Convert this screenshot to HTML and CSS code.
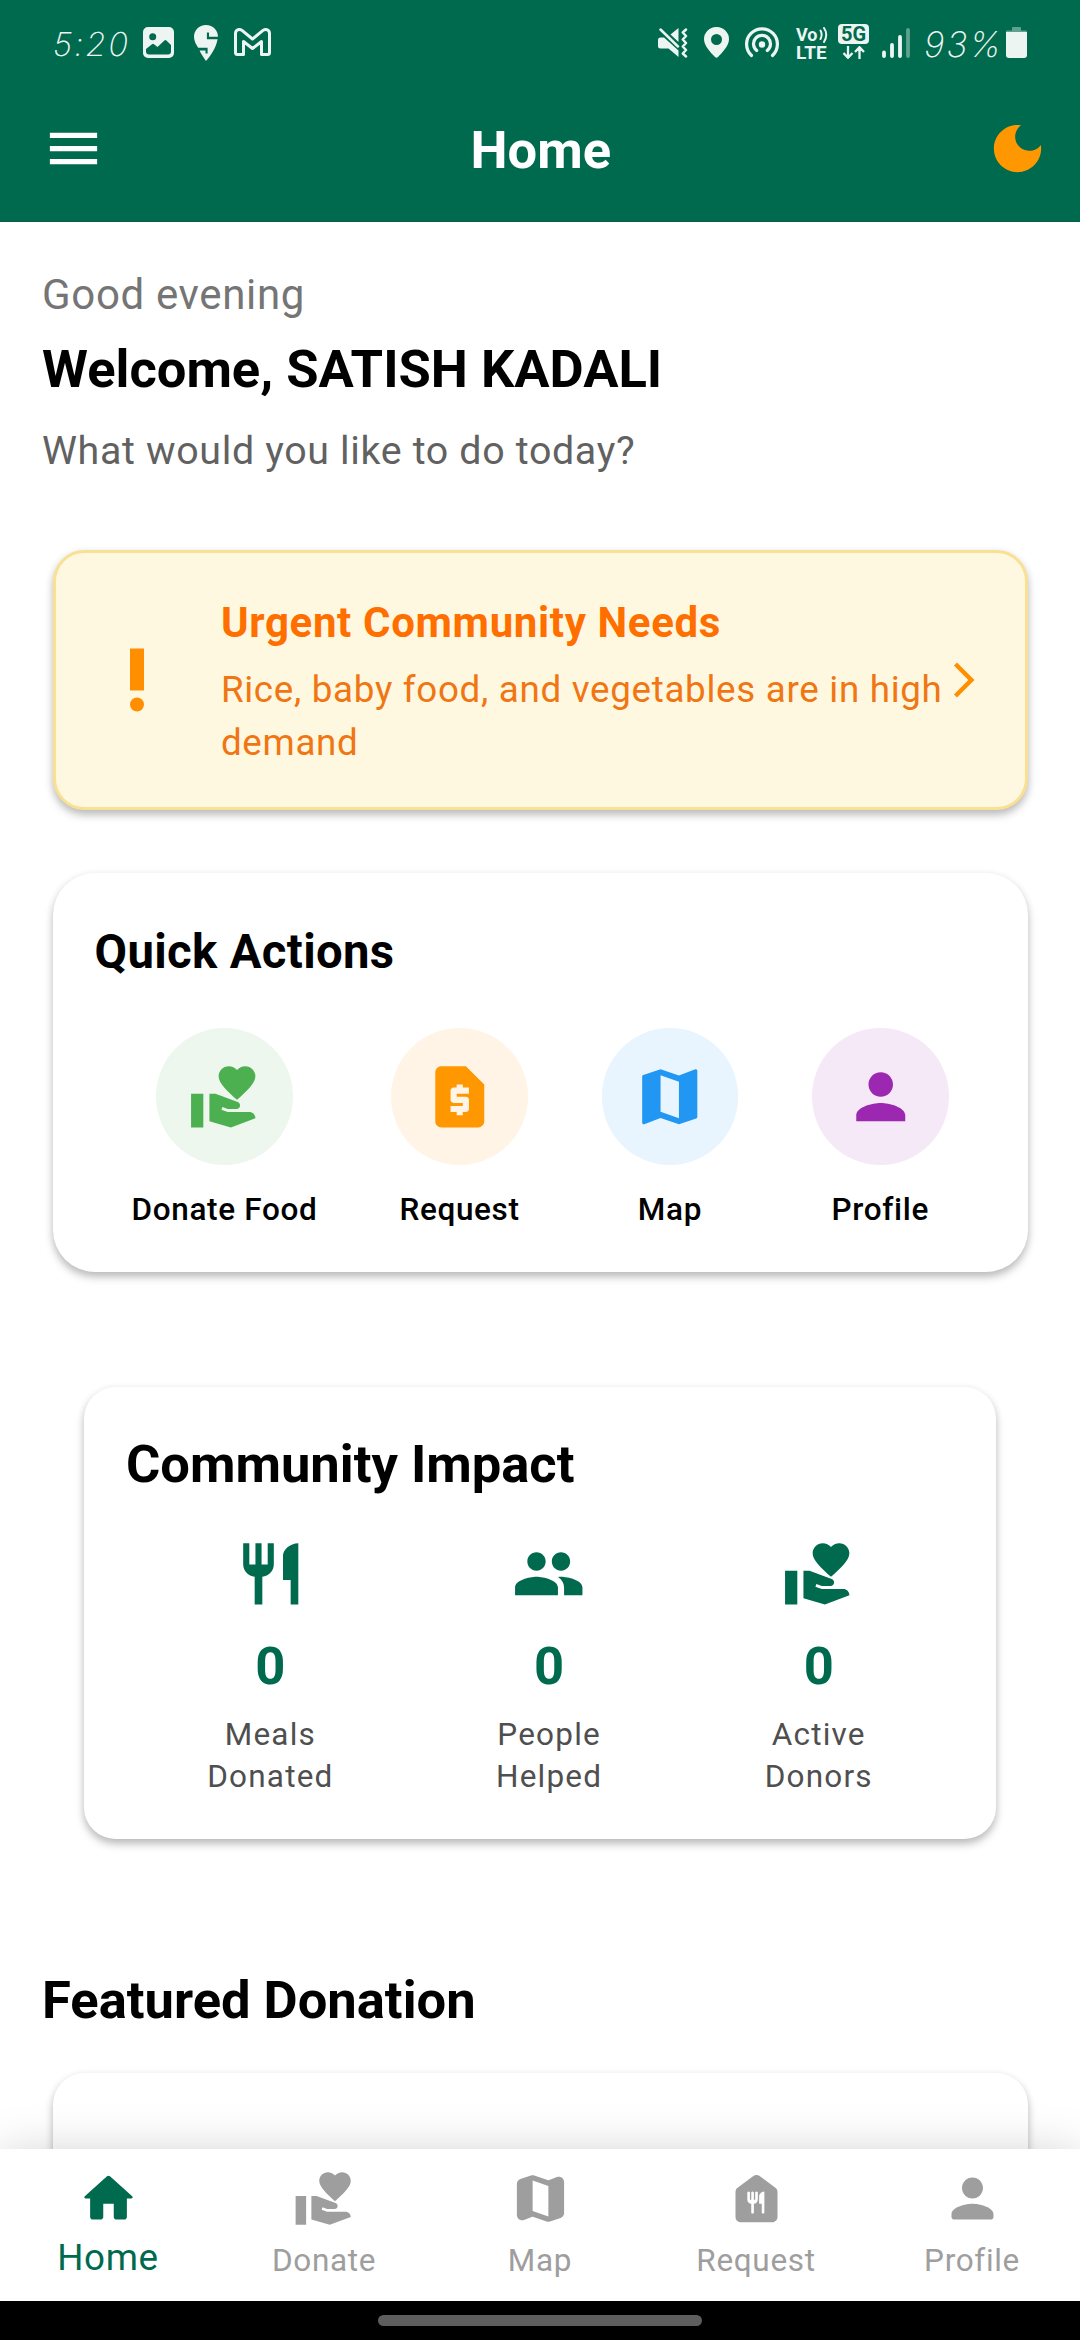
FILE: index.html
```html
<!DOCTYPE html>
<html lang="en">
<head>
<meta charset="utf-8">
<meta name="viewport" content="width=device-width, initial-scale=1">
<title>Home</title>
<link rel="stylesheet" href="styles.css">
</head>
<body>
<svg class="defs" aria-hidden="true">
  <symbol id="i-give" viewBox="0 0 24 24"><path d="M1 11h4v11H1zM16 3.25C16.65 2.49 17.66 2 18.7 2 20.55 2 22 3.45 22 5.3c0 2.27-2.91 4.9-6 7.7-3.09-2.81-6-5.44-6-7.7C10 3.45 11.45 2 13.3 2c1.04 0 2.05.49 2.7 1.25zM20 17h-7l-2.09-.73.33-.94L13 16h2.82c.65 0 1.18-.53 1.18-1.18 0-.49-.31-.93-.77-1.11L8.97 11H7v9.02L14 22l8.01-3c-.01-1.1-.9-2-2.01-2z"/></symbol>
  <symbol id="i-request" viewBox="0 0 24 24"><path d="M14 2H6C4.9 2 4.01 2.9 4.01 4L4 20c0 1.1.89 2 1.99 2H18c1.1 0 2-.9 2-2V8l-6-6zm1 9h-4v1h3c.55 0 1 .45 1 1v3c0 .55-.45 1-1 1h-1v1h-2v-1H9v-2h4v-1h-3c-.55 0-1-.45-1-1v-3c0-.55.45-1 1-1h1V8h2v1h2v2z"/></symbol>
  <symbol id="i-map" viewBox="0 0 24 24"><path d="M20.5 3l-.16.03L15 5.1 9 3 3.36 4.9c-.21.07-.36.25-.36.48V20.5c0 .28.22.5.5.5l.16-.03L9 18.9l6 2.1 5.64-1.9c.21-.07.36-.25.36-.48V3.5c0-.28-.22-.5-.5-.5zM15 19l-6-2.11V5l6 2.11V19z"/></symbol>
  <symbol id="i-person" viewBox="0 0 24 24"><path d="M12 12c2.21 0 4-1.79 4-4s-1.79-4-4-4-4 1.79-4 4 1.79 4 4 4zm0 2c-2.67 0-8 1.34-8 4v2h16v-2c0-2.66-5.33-4-8-4z"/></symbol>
  <symbol id="i-restaurant" viewBox="0 0 24 24"><path d="M11 9H9V2H7v7H5V2H3v7c0 2.12 1.66 3.84 3.75 3.97V22h2.5v-9.03C11.34 12.84 13 11.12 13 9V2h-2v7zm5-3v8h2.5v8H21V2c-2.76 0-5 2.24-5 4z"/></symbol>
  <symbol id="i-people" viewBox="0 0 24 24"><path d="M16 11c1.66 0 2.99-1.34 2.99-3S17.66 5 16 5c-1.66 0-3 1.34-3 3s1.34 3 3 3zm-8 0c1.66 0 2.99-1.34 2.99-3S9.66 5 8 5C6.34 5 5 6.34 5 8s1.34 3 3 3zm0 2c-2.33 0-7 1.17-7 3.5V19h14v-2.5c0-2.33-4.67-3.5-7-3.5zm8 0c-.29 0-.62.02-.97.05 1.16.84 1.97 1.97 1.97 3.45V19h6v-2.5c0-2.33-4.67-3.5-7-3.5z"/></symbol>
</svg>

<div class="screen">
  <header class="header">
    <div class="status">
      <div class="status-left">
        <span class="status-text time">5:20</span>
        <svg class="st-photo" viewBox="0 0 31 31"><path fill-rule="evenodd" d="M5 0h21a5 5 0 0 1 5 5v21a5 5 0 0 1-5 5H5a5 5 0 0 1-5-5V5a5 5 0 0 1 5-5zM9.700 6.200a3.500 3.500 0 1 0 0 7 3.500 3.500 0 0 0 0-7zM3 22v2.500C3 26.600 4.200 27.500 6 27.500h19c1.800 0 3-.9 3-3V18l-4.600-4.600a1.500 1.500 0 0 0-2 0L14.500 20l-3.500-2.800a1.500 1.500 0 0 0-2 0z"/></svg>
        <svg class="st-pin" viewBox="0 0 24 36"><path d="M12 0C19 0 24 5.500 24 11.800H15V7.600H12.900V14.200H23.600C22 23 16.500 31 12 36 9.800 33 7 29 5.600 25.600H11.500V28.400H13.600V22.700H4.200C1.800 19.500 0 15.500 0 11.800 0 5.500 5 0 12 0z"/></svg>
        <svg class="st-mail" viewBox="0 0 37 28"><path d="M1.500 5.500C1.500 1.800 5.200.4 8 2.400L18.500 11 29 2.400C31.800.4 35.500 1.800 35.500 5.500V24.500Q35.500 26.500 33.500 26.500H27.500V13.500L18.500 20.500 9.500 13.500V26.500H3.500Q1.500 26.500 1.500 24.500Z" fill="none" stroke="currentColor" stroke-width="3" stroke-linejoin="round"/></svg>
      </div>
      <div class="status-right">
        <svg class="st-mute" viewBox="0 0 30 30"><path d="M12.500 6.500L20.500 0V14zM2.500 9.500H6L20.500 22.500V29L10.500 20.500H2.500Q0 20.500 0 18V12Q0 9.500 2.500 9.500z"/><path d="M2.500 1.500L20 18.500M28 1.500L24.800 4.500 28 8 24.800 11.500 28 15 24.800 18.500 28 22 24.800 25.500 28 28.500" fill="none" stroke="currentColor" stroke-width="2.500" stroke-linecap="round" stroke-linejoin="round"/></svg>
        <svg class="st-place" viewBox="0 0 25 31"><path fill-rule="evenodd" d="M12.500 0A12.300 12.300 0 0 1 25 12.300C25 19 18 26 14 30Q12.500 31.500 11 30C7 26 0 19 0 12.300A12.300 12.300 0 0 1 12.500 0zm0 7a5.500 5.500 0 1 0 0 11 5.500 5.500 0 0 0 0-11z"/></svg>
        <svg class="st-hotspot" viewBox="0 0 34 31"><circle cx="17" cy="17.500" r="3.200"/><path d="M6.500 28.500A15.400 15.400 0 1 1 27.500 28.500M11.700 23.500A8.500 8.500 0 1 1 22.300 23.500" fill="none" stroke="currentColor" stroke-width="3.200" stroke-linecap="round"/></svg>
        <div class="st-volte"><span class="vo">Vo<svg viewBox="0 0 9 16"><path d="M1.500 3.500Q3.800 7.500 1.500 12M5 1Q9.500 7.500 5 15" fill="none" stroke="currentColor" stroke-width="2" stroke-linecap="round"/></svg></span><span class="lte">LTE</span></div>
        <div class="st-net"><span class="net-box">5G</span><svg viewBox="0 0 24 13"><path d="M6 0V11.500M1.500 7L6 11.800 10.500 7M17.500 13V1.500M13 6L17.500 1.200 22 6" fill="none" stroke="currentColor" stroke-width="2.300"/></svg></div>
        <svg class="st-signal" viewBox="0 0 28 30"><path d="M2 24.500V28M10 17V28M18 9V28" fill="none" stroke="currentColor" stroke-width="3.800" stroke-linecap="round"/><path d="M26 2V28" fill="none" stroke="currentColor" stroke-width="3.800" stroke-linecap="round" opacity=".4"/></svg>
        <span class="status-text battery">93%</span>
        <svg class="st-battery" viewBox="0 0 21 31"><path d="M0 5.500V4Q0 3.500 1 3.500H6V1Q6 0 7 0H14Q15 0 15 1V3.500H20Q21 3.500 21 5.500z" opacity=".4"/><path d="M0 5H21V28Q21 31 18 31H3Q0 31 0 28z"/></svg>
      </div>
    </div>
    <div class="appbar">
      <svg class="bar-icon menu" viewBox="0 0 24 24"><path d="M3 18h18v-2H3v2zm0-5h18v-2H3v2zm0-7v2h18V6H3z"/></svg>
      <h1 class="title">Home</h1>
      <svg class="bar-icon moon" viewBox="0 0 24 24"><path d="M12 3c-4.970 0-9 4.030-9 9s4.030 9 9 9 9-4.030 9-9c0-.46-.04-.92-.1-1.360-.98 1.370-2.580 2.260-4.400 2.260-2.980 0-5.400-2.420-5.400-5.400 0-1.810.89-3.420 2.260-4.400-.44-.06-.9-.1-1.360-.1z"/></svg>
    </div>
  </header>

  <main class="main">
    <p class="greeting">Good evening</p>
    <h2 class="welcome">Welcome, SATISH KADALI</h2>
    <p class="prompt">What would you like to do today?</p>

    <section class="card urgent">
      <svg class="urgent-icon" viewBox="0 0 24 24"><circle cx="12" cy="19" r="2"/><path d="M10 3h4v12h-4z"/></svg>
      <div class="urgent-body">
        <h3 class="urgent-title">Urgent Community Needs</h3>
        <p class="urgent-text">Rice, baby food, and vegetables are in high demand</p>
      </div>
      <svg class="urgent-arrow" viewBox="0 0 24 24"><path d="M6.230 20.230L8 22l10-10L8 2 6.230 3.770 14.460 12z"/></svg>
    </section>

    <section class="card quick">
      <h3 class="quick-title">Quick Actions</h3>
      <div class="actions">
        <div class="action"><span class="bubble green"><svg><use href="#i-give"/></svg></span><span class="action-label">Donate Food</span></div>
        <div class="action"><span class="bubble orange"><svg><use href="#i-request"/></svg></span><span class="action-label">Request</span></div>
        <div class="action"><span class="bubble blue"><svg><use href="#i-map"/></svg></span><span class="action-label">Map</span></div>
        <div class="action"><span class="bubble purple"><svg><use href="#i-person"/></svg></span><span class="action-label">Profile</span></div>
      </div>
    </section>

    <section class="card impact">
      <h3 class="impact-title">Community Impact</h3>
      <div class="stats">
        <div class="stat"><svg><use href="#i-restaurant"/></svg><b>0</b><span>Meals<br>Donated</span></div>
        <div class="stat"><svg><use href="#i-people"/></svg><b>0</b><span>People<br>Helped</span></div>
        <div class="stat"><svg><use href="#i-give"/></svg><b>0</b><span>Active<br>Donors</span></div>
      </div>
    </section>

    <h2 class="featured-title">Featured Donation</h2>
    <section class="card featured"></section>
  </main>

  <nav class="nav">
    <a class="nav-item active"><svg viewBox="0 0 24 24"><path d="M10 19v-5h4v5c0 .55.45 1 1 1h3c.55 0 1-.45 1-1v-7h1.700c.46 0 .68-.57.33-.87L12.670 3.600c-.38-.34-.96-.34-1.340 0l-8.360 7.530c-.34.3-.13.87.33.87H5v7c0 .55.45 1 1 1h3c.55 0 1-.45 1-1z"/></svg><span>Home</span></a>
    <a class="nav-item"><svg><use href="#i-give"/></svg><span>Donate</span></a>
    <a class="nav-item"><svg viewBox="0 0 24 24"><path d="M14.650 4.980l-5-1.750c-.42-.15-.88-.15-1.300-.01L4.360 4.560C3.550 4.840 3 5.600 3 6.460v11.850c0 1.410 1.410 2.370 2.720 1.860l2.930-1.140c.22-.09.47-.09.69-.01l5 1.750c.42.15.88.15 1.300.01l3.990-1.340c.81-.27 1.360-1.040 1.360-1.900V5.690c0-1.410-1.410-2.370-2.720-1.860l-2.930 1.140c-.22.08-.46.09-.69.01zM15 18.890l-6-2.110V5.110l6 2.110v11.670z"/></svg><span>Map</span></a>
    <a class="nav-item"><svg viewBox="0 0 24 24"><path d="M10.800 3.400l-6 4.500C4.300 8.280 4 8.870 4 9.500V19c0 1.100.9 2 2 2h12c1.100 0 2-.9 2-2V9.500c0-.63-.3-1.220-.8-1.600l-6-4.500c-.71-.53-1.690-.53-2.400 0z"/><path fill="#fff" d="M12.500 12.500c0 .83-.67 1.500-1.500 1.500v3.500q-.5.500-1 0V14c-.83 0-1.500-.67-1.500-1.500V9.600q.5-.6 1 0v2.900h.5V9.600q.5-.6 1 0v2.900h.5V9.600q.5-.6 1 0zM15 17.500q-.5.500-1 0V14h-1v-2.700c0-1.100.9-2 2-2z"/></svg><span>Request</span></a>
    <a class="nav-item"><svg viewBox="0 0 24 24"><path d="M12 12c2.210 0 4-1.790 4-4s-1.790-4-4-4-4 1.790-4 4 1.790 4 4 4zm0 2c-2.670 0-8 1.340-8 4v1c0 .55.45 1 1 1h14c.55 0 1-.45 1-1v-1c0-2.660-5.330-4-8-4z"/></svg><span>Profile</span></a>
  </nav>
  <div class="gesture"><span class="pill"></span></div>
</div>
</body>
</html>
```
FILE: styles.css
```css
* { box-sizing: border-box; margin: 0; padding: 0; }

body { background: #fff; font-family: Roboto, sans-serif; font-weight: 400; color: #000; }
svg { display: block; fill: currentColor; flex: none; }
.defs { display: none; }

.screen { width: 1080px; height: 2340px; display: flex; flex-direction: column; overflow: hidden; }

/* Header */
.header { height: 222px; flex: none; background: #006a4e; border-bottom: 1px solid #075c45; }
.status { height: 85px; padding: 0 53px; display: flex; justify-content: space-between; color: #ecf5f2; }
.status-left, .status-right { display: flex; align-items: flex-start; }
.status-text { font-family: Inter, sans-serif; font-style: italic; font-weight: 200; font-size: 33px; line-height: 40px; white-space: nowrap; }
.time { width: 90px; margin-top: 24px; letter-spacing: 2.200px; }
.st-photo { width: 31px; height: 31px; margin-top: 27px; }
.st-pin { width: 24px; height: 36px; margin: 25px 0 0 20px; }
.st-mail { width: 37px; height: 28px; margin: 28px 0 0 16px; }
.st-mute { width: 30px; height: 30px; margin-top: 28px; }
.st-place { width: 25px; height: 31px; margin: 27px 0 0 16px; }
.st-hotspot { width: 34px; height: 31px; margin: 27px 0 0 16px; }
.st-volte { width: 33px; margin: 26px 0 0 17px; font-weight: 700; font-size: 18px; line-height: 17px; }
.vo { display: flex; gap: 1px; height: 17px; font-size: 18px; }
.vo svg { width: 9px; height: 16px; margin-top: 1px; }
.lte { display: block; font-size: 19px; line-height: 19px; }
.st-net { width: 31px; margin: 24px 0 0 9px; display: flex; flex-direction: column; align-items: center; }
.net-box { width: 31px; height: 20px; border-radius: 4px; background: #ecf5f2; color: #006a4e; font-weight: 700; font-size: 20px; line-height: 21px; text-align: center; }
.st-net svg { width: 24px; height: 13px; margin-top: 1.500px; }
.st-signal { width: 28px; height: 30px; margin: 28px 0 0 13px; }
.battery { width: 82px; margin: 24px 0 0 14px; font-size: 35px; letter-spacing: 2px; }
.st-battery { width: 21px; height: 31px; margin-top: 27px; }

.appbar { height: 127px; padding: 0 31.500px 0 42px; display: flex; align-items: center; justify-content: space-between; }
.bar-icon { width: 63px; height: 63px; }
.menu { color: #fff; }
.moon { color: #ff9800; }
.title { font-weight: 700; font-size: 52.500px; line-height: 72px; padding: 2px 9px 0 0; color: #fff; }

/* Content */
.main { flex: 1; min-height: 0; overflow: hidden; padding-top: 41px; }
.greeting { margin-left: 42px; font-size: 42px; line-height: 63px; letter-spacing: .66px; color: #757575; }
.welcome { margin: 9px 0 0 42px; font-weight: 700; font-size: 52.500px; line-height: 68px; }
.prompt { margin: 20px 0 0 42px; font-size: 39.375px; line-height: 56px; letter-spacing: .66px; color: #616161; }

.card { margin: 0 52.500px; border-radius: 31.500px; background: #fff; box-shadow: 0 5px 8px rgba(0, 0, 0, .25), 0 1px 8px rgba(0, 0, 0, .05); }

.urgent { height: 260px; margin-top: 71px; padding: 0 39.400px; display: flex; align-items: center; background: #fff8e1; border: 3px solid #fae093; }
.urgent-icon { width: 84px; height: 84px; color: #ff8f00; }
.urgent-body { flex: 1; margin-left: 42px; min-width: 0; }
.urgent-title { font-weight: 700; font-size: 42px; line-height: 61px; letter-spacing: .66px; color: #ff6f00; }
.urgent-text { margin-top: 10px; font-size: 36.750px; line-height: 53px; letter-spacing: .7px; color: #f07613; }
.urgent-arrow { width: 42px; height: 42px; color: #ff8f00; }

.quick { height: 399px; margin-top: 63px; padding: 42px; border-radius: 42px; }
.quick-title { font-weight: 700; font-size: 47.250px; line-height: 74px; letter-spacing: .35px; }
.actions { margin-top: 39px; display: flex; justify-content: space-around; }
.action { display: flex; flex-direction: column; align-items: center; }
.bubble { width: 136.500px; height: 136.500px; border-radius: 50%; display: flex; align-items: center; justify-content: center; }
.bubble svg { width: 73.500px; height: 73.500px; }
.green { background: #edf7ee; color: #4caf50; }
.orange { background: #fff4e5; color: #ff9800; }
.blue { background: #e8f4fe; color: #2196f3; }
.purple { background: #f5e9f7; color: #9c27b0; }
.action-label { margin-top: 24.500px; font-weight: 500; font-size: 31.500px; line-height: 42px; letter-spacing: .66px; }

.impact { height: 452px; margin: 115px 84px 0; padding: 42px; }
.impact-title { font-weight: 700; font-size: 52.500px; line-height: 70px; }
.stats { margin-top: 38px; display: flex; justify-content: space-around; color: #006a4e; }
.stat { display: flex; flex-direction: column; align-items: center; text-align: center; }
.stat svg { width: 73.500px; height: 73.500px; }
.stat b { margin-top: 18px; font-weight: 700; font-size: 52.500px; line-height: 74px; }
.stat span { margin-top: 11.500px; font-size: 31.500px; line-height: 42px; letter-spacing: 1.200px; color: #4f4f4f; }

.featured-title { margin: 126px 0 0 42px; font-weight: 700; font-size: 52.500px; line-height: 70px; }
.featured { height: 200px; margin-top: 38px; }

/* Bottom navigation */
.nav { position: relative; z-index: 1; flex: none; height: 152px; display: flex; background: #fff; color: #9e9e9e; box-shadow: 0 8px 52px rgba(0, 0, 0, .22); }
.nav-item { flex: 1; display: flex; flex-direction: column; align-items: center; padding-top: 18px; }
.nav-item svg { width: 63px; height: 63px; }
.nav-item span { margin-top: 5px; font-size: 31.500px; line-height: 52px; letter-spacing: .66px; }
.nav-item.active { color: #006a4e; }
.nav-item.active span { margin-top: 2px; font-size: 36.750px; }

.gesture { position: relative; z-index: 2; flex: none; height: 39px; display: flex; justify-content: center; align-items: center; background: #000; }
.pill { width: 324px; height: 11px; border-radius: 6px; background: #5e5e5e; }
```
